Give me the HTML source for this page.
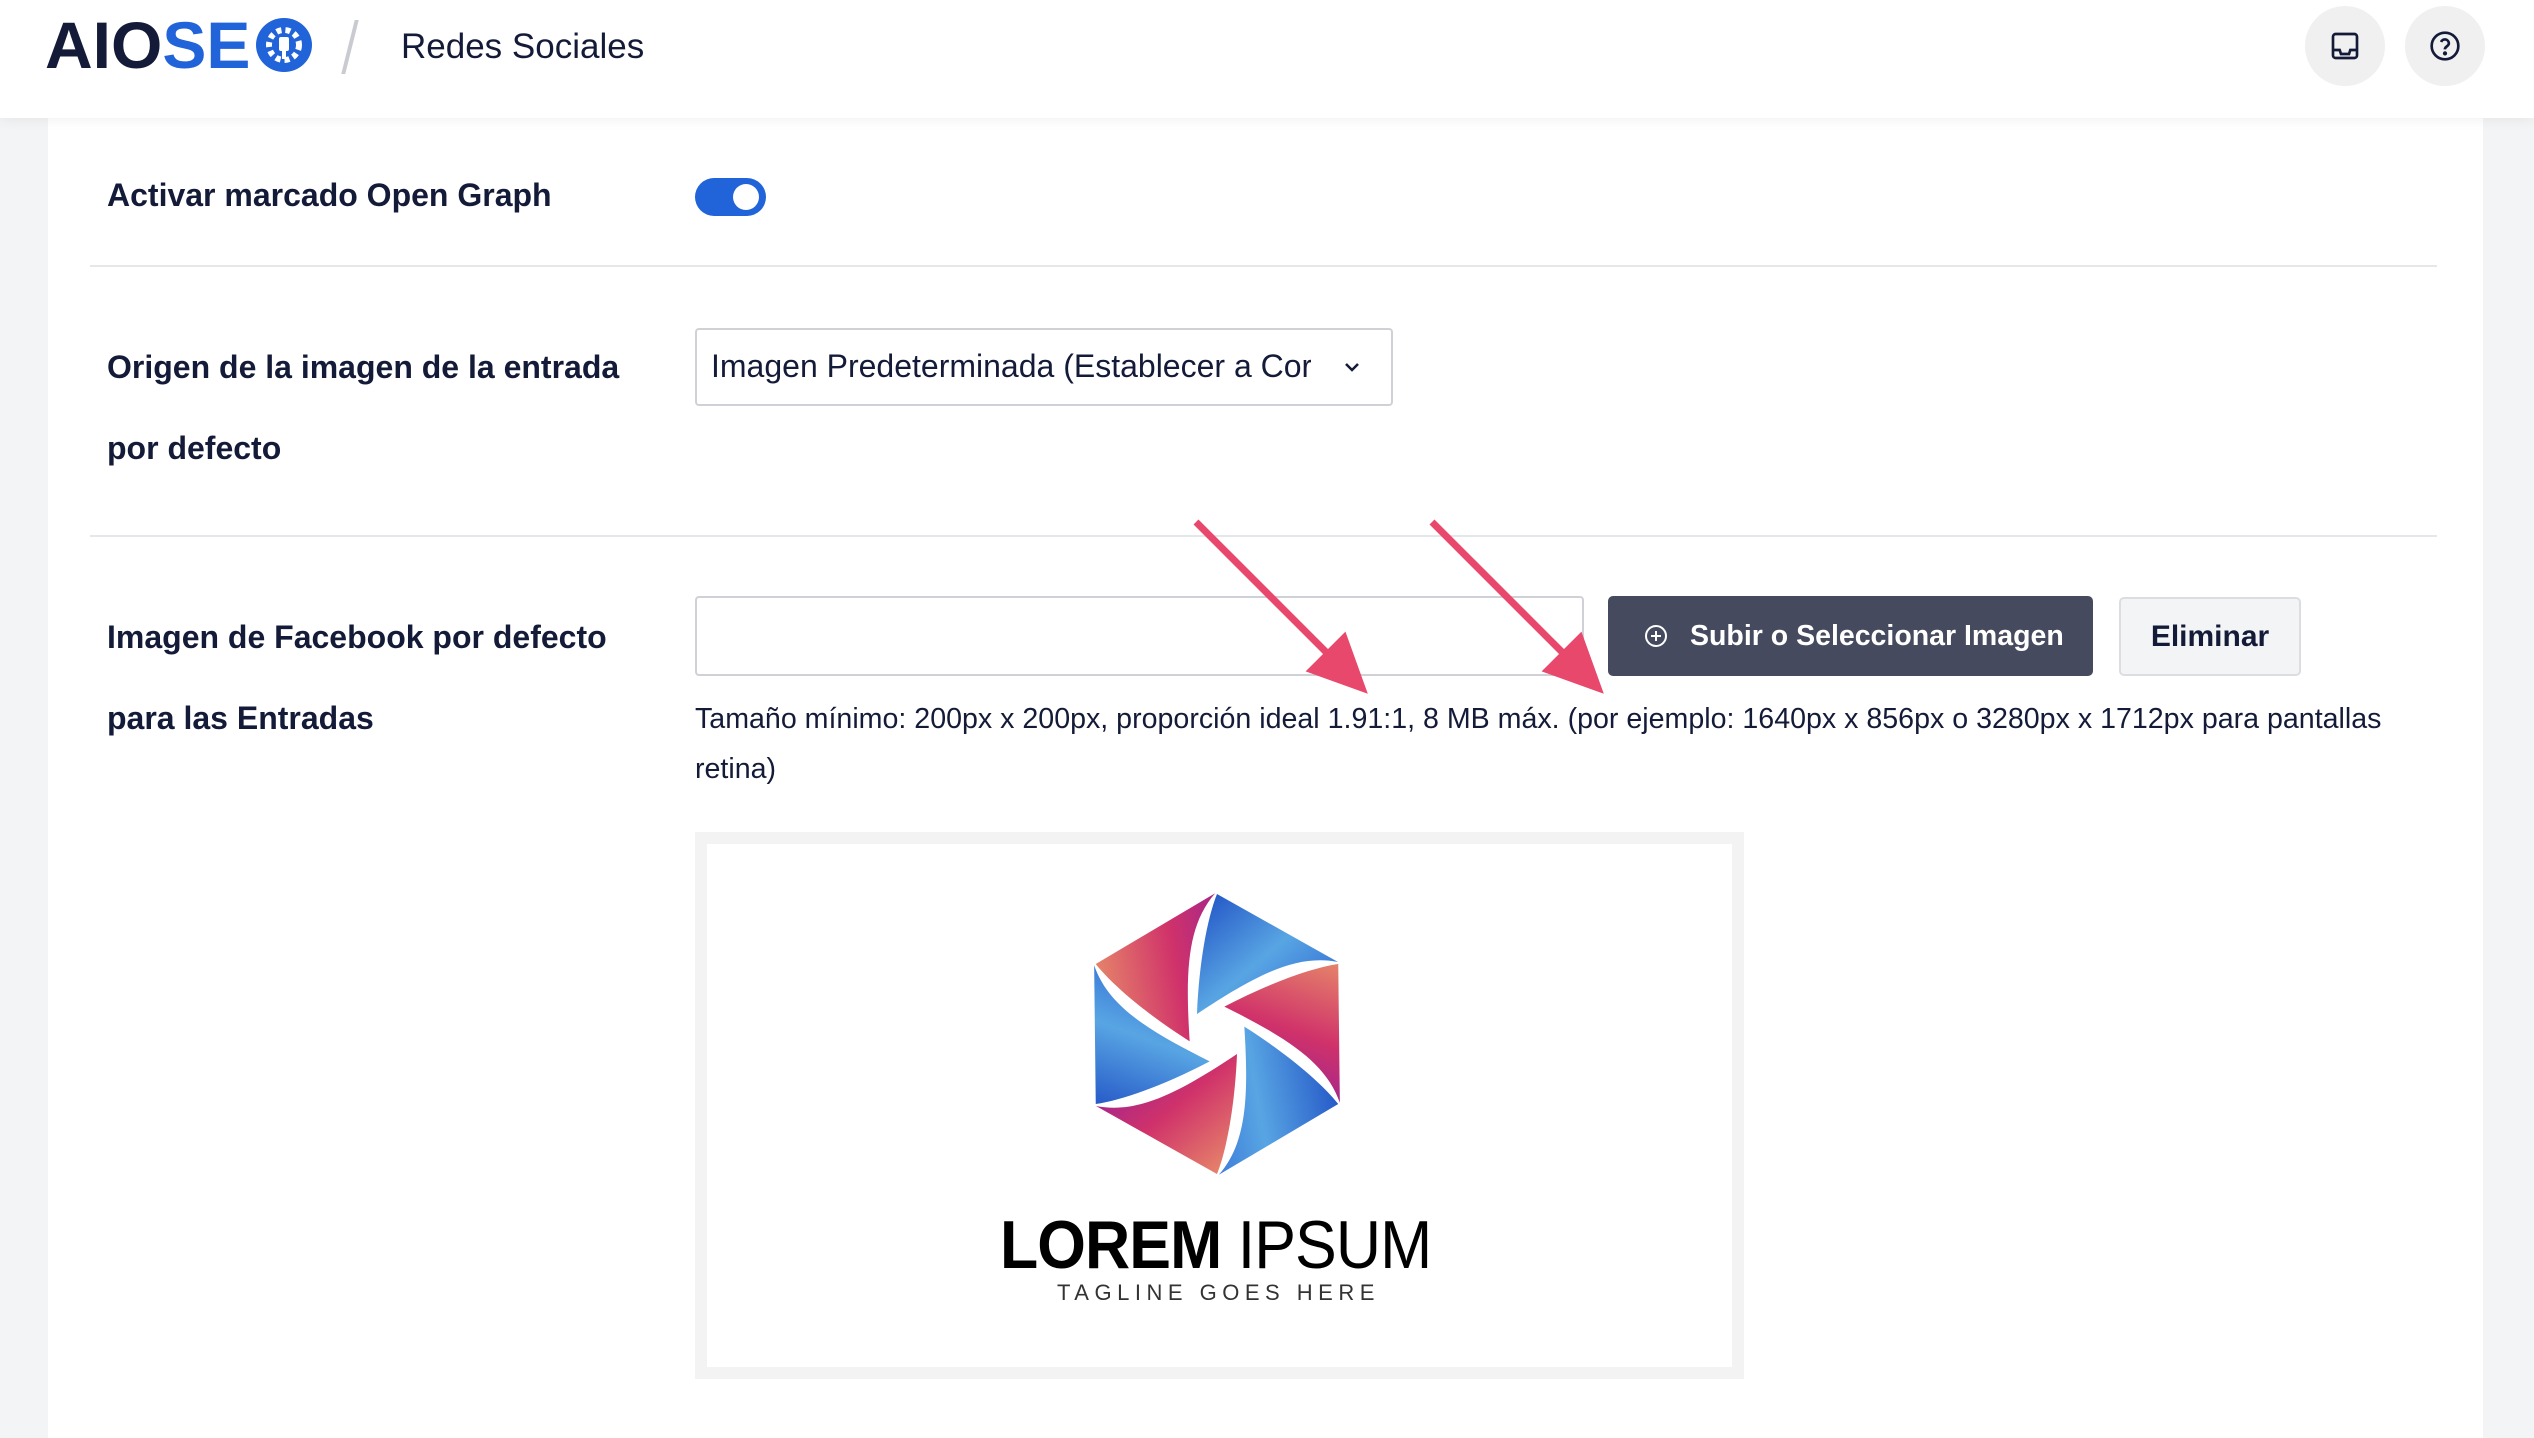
<!DOCTYPE html>
<html><head><meta charset="utf-8"><style>
*{margin:0;padding:0;box-sizing:border-box}
body{width:2534px;height:1426px;overflow:hidden;background:#f3f4f5;font-family:"Liberation Sans",sans-serif;color:#141b38;position:relative}
.hdr{position:absolute;left:0;top:0;width:2534px;height:118px;background:#fff;box-shadow:0 2px 12px rgba(0,0,0,0.06);z-index:2}
.card{position:absolute;left:48px;top:118px;width:2435px;height:1320px;background:#fff}
.abs{position:absolute}
.lbl{font-weight:bold;font-size:32px;line-height:81px}
.div{position:absolute;left:90px;width:2347px;height:2px;background:#e6e7ea}
.help{font-size:28.6px;line-height:50px;color:#141b38}
</style></head><body>
<div class="hdr">
  <div class="abs" style="left:45px;top:8px;font-size:66px;font-weight:900;letter-spacing:0px;line-height:74px"><span style="color:#141b38">AIO</span><span style="color:#2163d8">SE</span></div>
  <svg class="abs" style="left:254px;top:17px" width="60" height="56" viewBox="0 0 60 56"><ellipse cx="30" cy="28" rx="28" ry="27" fill="#2163d8"/><circle cx="30" cy="28" r="15" fill="none" stroke="#fff" stroke-width="6" stroke-dasharray="5 4"/><rect x="25" y="20" width="10" height="14" rx="2" fill="#fff"/><rect x="28" y="33" width="4" height="9" fill="#fff"/></svg>
  <div class="abs" style="left:348px;top:20px;width:4px;height:54px;background:#c9cbd1;transform:skewX(-14deg)"></div>
  <div class="abs" style="left:401px;top:25px;font-size:35px;line-height:44px;color:#141b38">Redes Sociales</div>
  <div class="abs" style="left:2305px;top:6px;width:80px;height:80px;border-radius:50%;background:#f0f0f1"></div>
  <svg class="abs" style="left:2329px;top:30px" width="32" height="32" viewBox="0 0 24 24" fill="none" stroke="#141b38" stroke-width="2"><rect x="3" y="3" width="18" height="18" rx="2"/><path d="M3 15h5l1 3h6l1-3h5"/></svg>
  <div class="abs" style="left:2405px;top:6px;width:80px;height:80px;border-radius:50%;background:#f0f0f1"></div>
  <svg class="abs" style="left:2429px;top:30px" width="32" height="32" viewBox="0 0 24 24" fill="none" stroke="#141b38" stroke-width="2"><circle cx="12" cy="12" r="10"/><path d="M9.1 9a3 3 0 0 1 5.8 1c0 2-3 2.5-3 4.5"/><circle cx="12" cy="17.5" r="0.6" fill="#141b38"/></svg>
</div>
<div class="card"></div>
<div class="abs lbl" style="left:107px;top:155px">Activar marcado Open Graph</div>
<div class="abs" style="left:695px;top:178px;width:71px;height:38px;border-radius:19px;background:#2163d8"></div>
<div class="abs" style="left:733px;top:184px;width:26px;height:26px;border-radius:50%;background:#fff"></div>
<div class="div" style="top:265px"></div>
<div class="abs lbl" style="left:107px;top:327px">Origen de la imagen de la entrada<br>por defecto</div>
<div class="abs" style="left:695px;top:328px;width:698px;height:78px;border:2px solid #d0d1d7;border-radius:4px"></div>
<div class="abs" style="left:711px;top:346px;font-size:32px;line-height:40px;width:600px;overflow:hidden;white-space:nowrap">Imagen Predeterminada (Establecer a Cor</div>
<svg class="abs" style="left:1340px;top:355px" width="24" height="24" viewBox="0 0 24 24" fill="none" stroke="#141b38" stroke-width="2.5"><path d="M6 9l6 6 6-6"/></svg>
<div class="div" style="top:535px"></div>
<div class="abs lbl" style="left:107px;top:597px">Imagen de Facebook por defecto<br>para las Entradas</div>
<div class="abs" style="left:695px;top:596px;width:889px;height:80px;border:2px solid #d0d1d7;border-radius:4px"></div>
<div class="abs" style="left:1608px;top:596px;width:485px;height:80px;border-radius:5px;background:#454a5f;color:#fff;font-weight:bold;font-size:28.5px;line-height:80px;padding-left:82px">Subir o Seleccionar Imagen</div>
<svg class="abs" style="left:1644px;top:624px" width="24" height="24" viewBox="0 0 24 24" fill="none" stroke="#fff" stroke-width="2"><circle cx="12" cy="12" r="10"/><path d="M12 7v10M7 12h10"/></svg>
<div class="abs" style="left:2119px;top:597px;width:182px;height:79px;border-radius:5px;background:#f3f4f5;border:2px solid #dcdde1;font-weight:bold;font-size:30px;line-height:75px;text-align:center">Eliminar</div>
<div class="abs help" style="left:695px;top:694px;width:1720px">Tamaño mínimo: 200px x 200px, proporción ideal 1.91:1, 8 MB máx. (por ejemplo: 1640px x 856px o 3280px x 1712px para pantallas retina)</div>
<div class="abs" style="left:695px;top:832px;width:1049px;height:547px;border:12px solid #f3f3f3;background:#fff"></div>
<svg class="abs" style="left:1077px;top:884px" width="280" height="300" viewBox="-140 -150 280 300">
<defs>
<linearGradient id="ga" x1="0" y1="0" x2="1" y2="1"><stop offset="0" stop-color="#e8906a"/><stop offset=".5" stop-color="#d0326a"/><stop offset="1" stop-color="#8a1fa0"/></linearGradient>
<linearGradient id="gb" x1="0" y1="0" x2="1" y2="1"><stop offset="0" stop-color="#1f4fc4"/><stop offset=".5" stop-color="#58a5e3"/><stop offset="1" stop-color="#2a5fd2"/></linearGradient>
</defs>
<path d="M0,-140 L121,-72 C80,-80 40,-60 -20,-20 C-18,-70 -10,-115 0,-140Z" fill="url(#gb)"/>
<path d="M0,-140 L121,-72 C80,-80 40,-60 -20,-20 C-18,-70 -10,-115 0,-140Z" fill="url(#ga)" transform="rotate(60)"/>
<path d="M0,-140 L121,-72 C80,-80 40,-60 -20,-20 C-18,-70 -10,-115 0,-140Z" fill="url(#gb)" transform="rotate(120)"/>
<path d="M0,-140 L121,-72 C80,-80 40,-60 -20,-20 C-18,-70 -10,-115 0,-140Z" fill="url(#ga)" transform="rotate(180)"/>
<path d="M0,-140 L121,-72 C80,-80 40,-60 -20,-20 C-18,-70 -10,-115 0,-140Z" fill="url(#gb)" transform="rotate(240)"/>
<path d="M0,-140 L121,-72 C80,-80 40,-60 -20,-20 C-18,-70 -10,-115 0,-140Z" fill="url(#ga)" transform="rotate(300)"/>
</svg>
<div class="abs" style="left:1000px;top:1205px;font-size:68px;line-height:80px;color:#000;letter-spacing:-1px;white-space:nowrap;transform:scaleX(0.92);transform-origin:0 0"><b>LOREM</b> IPSUM</div>
<div class="abs" style="left:1057px;top:1280px;font-size:22px;letter-spacing:5.5px;color:#333;white-space:nowrap">TAGLINE GOES HERE</div>
<svg class="abs" style="left:0;top:0" width="2534" height="1426">
<g stroke="#e8486b" stroke-width="7" fill="#e8486b">
<line x1="1196" y1="522" x2="1330" y2="656"/><path d="M1362 688 L1312 670 L1344 638Z"/>
<line x1="1432" y1="522" x2="1566" y2="656"/><path d="M1598 688 L1548 670 L1580 638Z"/>
</g></svg>
</body></html>
